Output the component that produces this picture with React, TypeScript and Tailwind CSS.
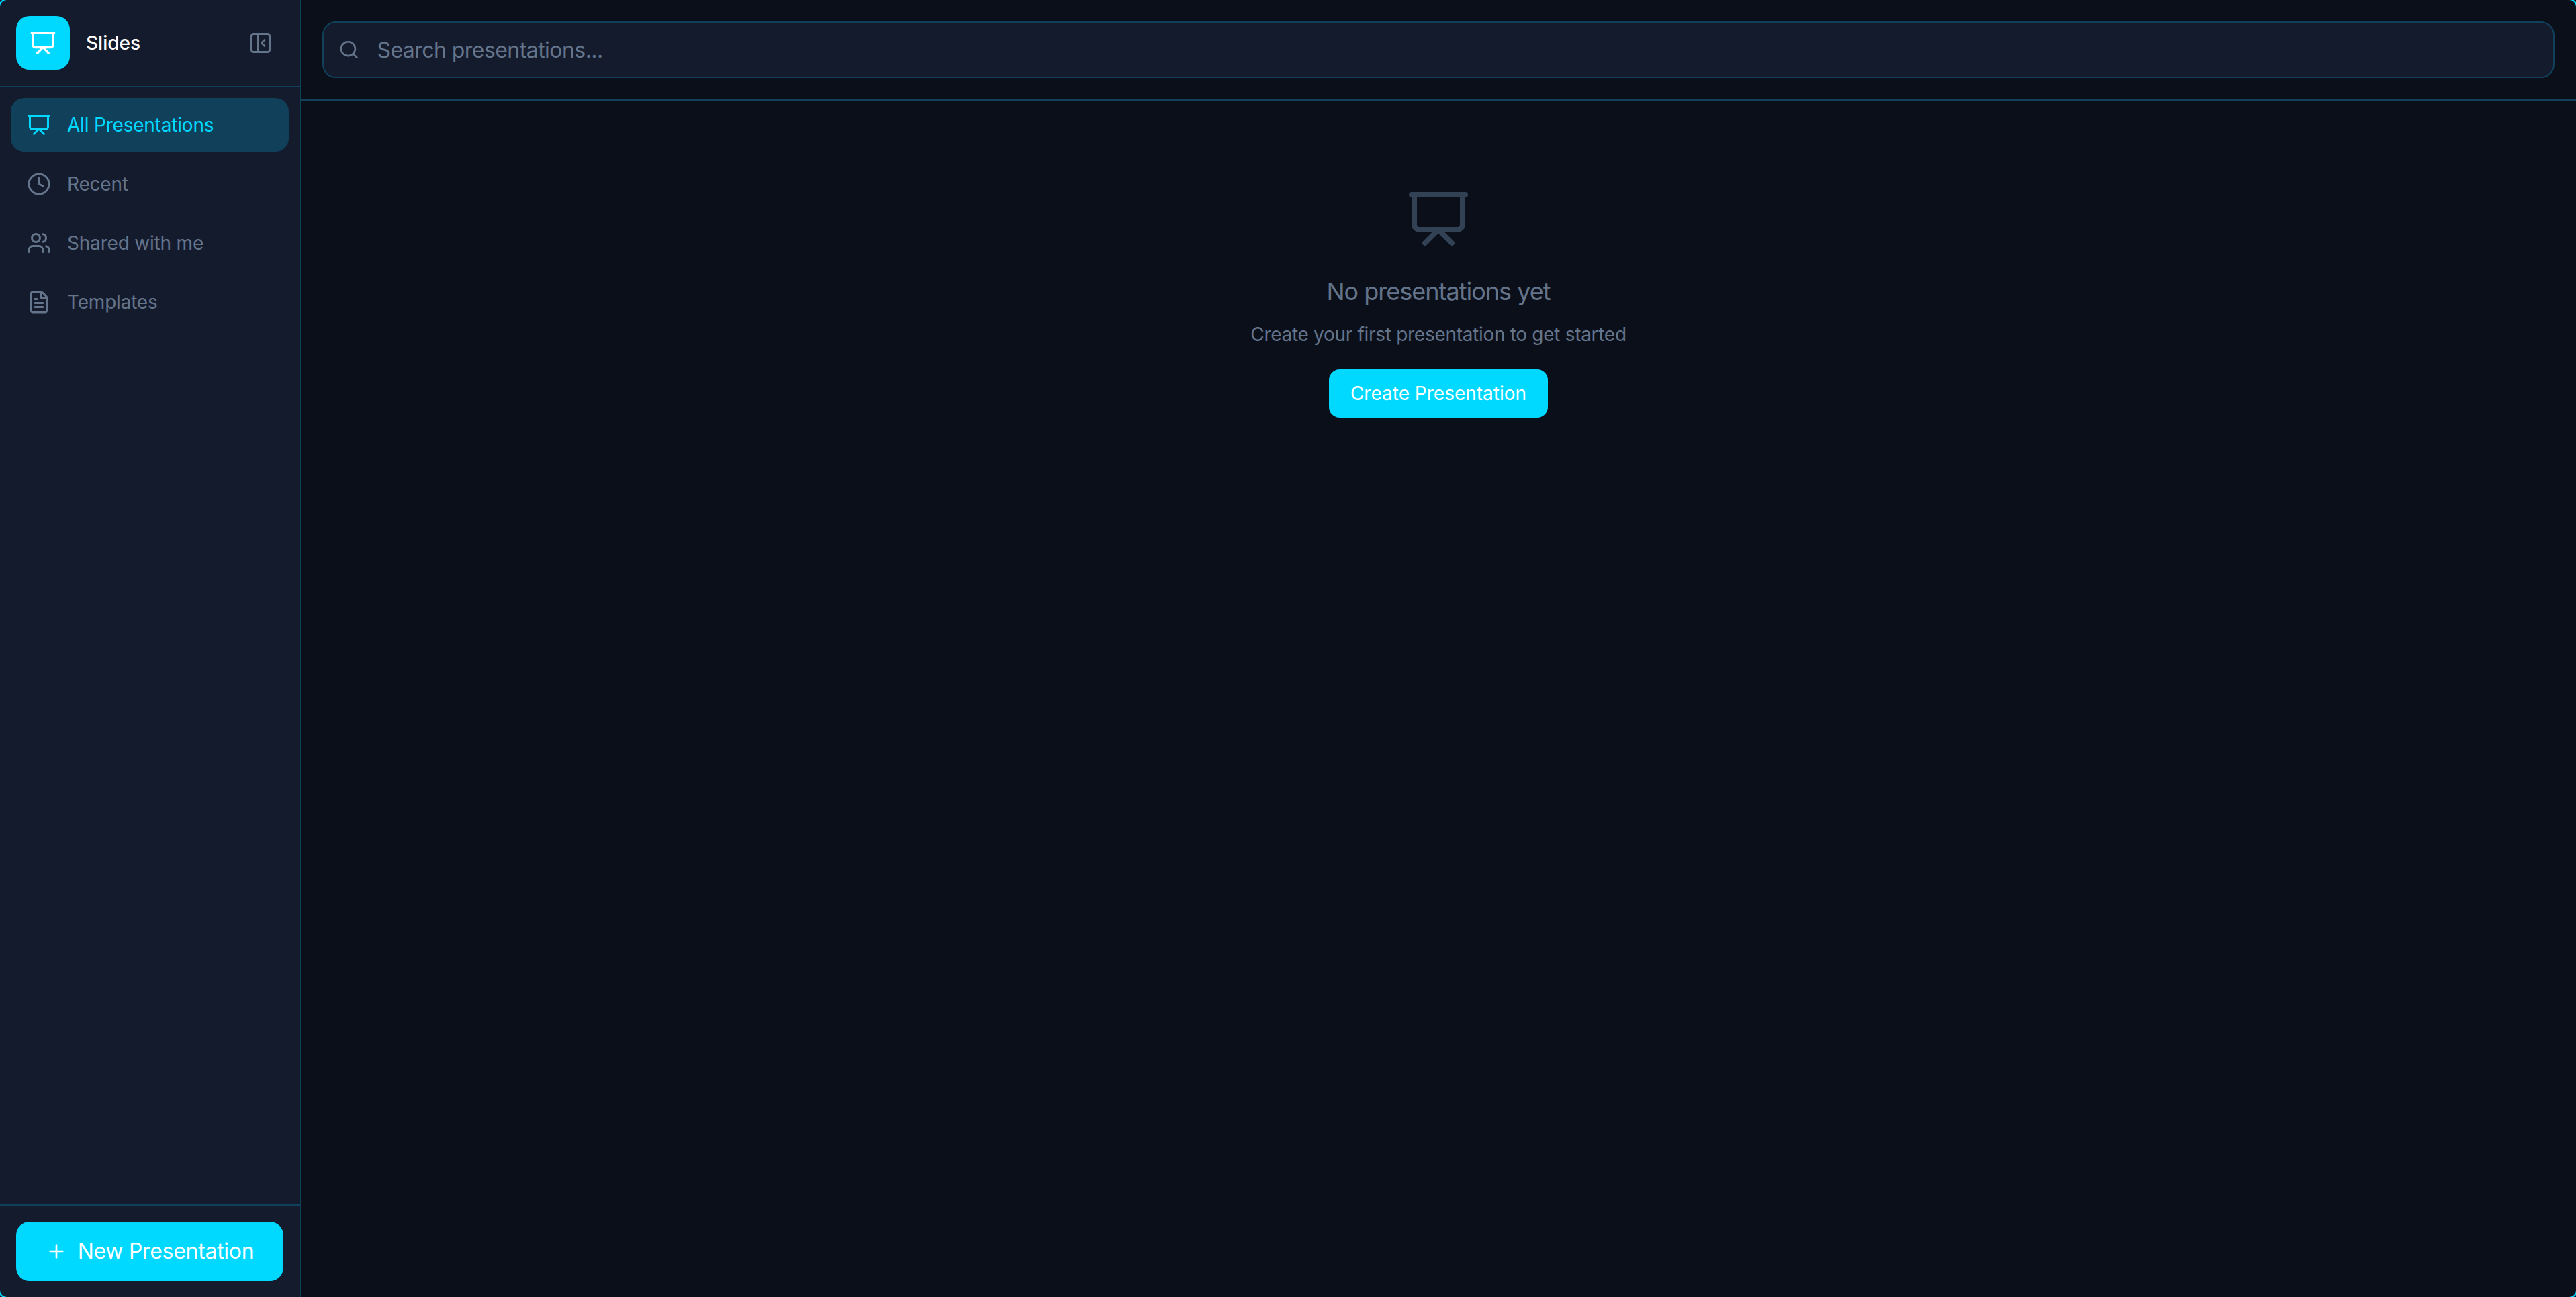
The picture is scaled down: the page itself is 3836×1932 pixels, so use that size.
import React from 'react';
import { Clock, FileText, PanelLeftClose, Plus, Presentation, Search, Users } from 'lucide-react';

const navItems = [
  { label: 'All Presentations', icon: Presentation, active: true },
  { label: 'Recent', icon: Clock, active: false },
  { label: 'Shared with me', icon: Users, active: false },
  { label: 'Templates', icon: FileText, active: false },
];

function Sidebar() {
  return (
    <aside className="flex h-full w-[448px] shrink-0 flex-col border-r-2 border-[#11405a] bg-[#141b2d]">
      {/* Logo row */}
      <div className="flex h-[130px] shrink-0 items-center justify-between border-b-2 border-[#11405a] pl-6 pr-10">
        <div className="flex items-center gap-6">
          <div className="flex h-20 w-20 items-center justify-center rounded-[20px] bg-[#00d9ff] text-white">
            <Presentation size={40} />
          </div>
          <span className="text-[28px] font-medium leading-10 text-white">Slides</span>
        </div>
        <button className="text-[#64748b]">
          <PanelLeftClose size={36} />
        </button>
      </div>

      {/* Navigation */}
      <nav className="flex flex-1 flex-col gap-2 p-4">
        {navItems.map(({ label, icon: Icon, active }) => (
          <a
            key={label}
            className={`flex h-20 items-center gap-6 rounded-[20px] px-6 text-[28px] tracking-[-0.2px] ${
              active ? 'bg-[#11405a] text-[#00d9ff]' : 'text-[#64748b]'
            }`}
          >
            <Icon size={36} />
            <span>{label}</span>
          </a>
        ))}
      </nav>

      {/* New presentation */}
      <div className="shrink-0 border-t-2 border-[#11405a] p-6">
        <button className="flex h-[88px] w-full items-center justify-center gap-4 rounded-[20px] bg-[#00d9ff] text-[32px] font-normal tracking-[-0.3px] text-white">
          <Plus size={32} />
          New Presentation
        </button>
      </div>
    </aside>
  );
}

function SearchBar() {
  return (
    <div className="shrink-0 border-b-2 border-[#11405a] px-8 py-8">
      <label className="flex h-[84px] items-center gap-[26px] rounded-[20px] border-2 border-[#11405a] bg-[#141b2d] px-[22px] text-[#64748b]">
        <Search size={32} />
        <input
          className="w-full bg-transparent pt-0.5 text-[32px] tracking-[-0.55px] outline-none placeholder:text-[#64748b]"
          placeholder="Search presentations..."
        />
      </label>
    </div>
  );
}

function EmptyState() {
  return (
    <div className="flex flex-1 flex-col items-center pt-[128px]">
      <Presentation size={96} className="text-[#334155]" />
      <h2 className="mt-8 text-[36px] leading-[56px] tracking-[-1px] text-[#64748b]">No presentations yet</h2>
      <p className="mt-4 text-[28px] leading-10 tracking-[-0.3px] text-[#64748b]">
        Create your first presentation to get started
      </p>
      <button className="mt-8 h-[72px] rounded-[16px] bg-[#00d9ff] px-8 text-[28px] font-normal text-white">
        Create Presentation
      </button>
    </div>
  );
}

export default function App() {
  return (
    <div className="relative flex h-screen w-screen overflow-hidden bg-[#0a0f19] font-['Inter',sans-serif]">
      <Sidebar />
      <main className="flex min-w-0 flex-1 flex-col">
        <SearchBar />
        <EmptyState />
      </main>
      {/* Window frame: only the corner arcs show inside the viewport */}
      <div className="pointer-events-none absolute inset-[-2px] rounded-[12px] border-2 border-[#00d9ff]" />
    </div>
  );
}
